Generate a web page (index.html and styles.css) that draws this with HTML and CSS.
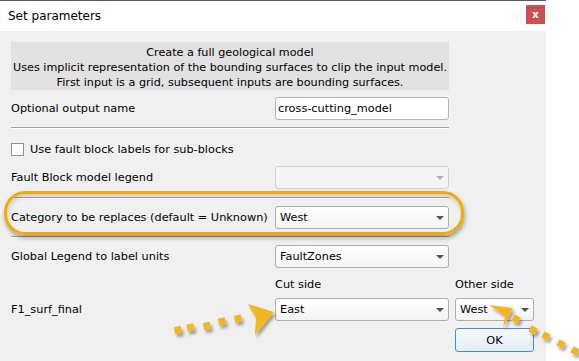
FILE: index.html
```html
<!DOCTYPE html>
<html>
<head>
<meta charset="utf-8">
<link rel="stylesheet" href="styles.css">
</head>
<body>
<div class="dialog">
  <div class="titlebar">
    <span class="title">Set parameters</span>
    <span class="close">x</span>
  </div>
  <div class="body">
    <div class="form">
      <div class="info">
        <div>Create a full geological model</div>
        <div>Uses implicit representation of the bounding surfaces to clip the input model.</div>
        <div>First input is a grid, subsequent inputs are bounding surfaces.</div>
      </div>

      <div class="label r-out">Optional output name</div>
      <div class="input r-out">cross-cutting_model</div>

      <div class="sep s1"></div>

      <div class="check r-chk"><span class="box"></span><span>Use fault block labels for sub-blocks</span></div>

      <div class="label r-fault">Fault Block model legend</div>
      <div class="combo disabled r-fault"><span></span><i class="arrow"></i></div>

      <div class="sep s2"></div>

      <div class="label r-cat">Category to be replaces (default = Unknown)</div>
      <div class="combo r-cat"><span>West</span><i class="arrow"></i><div class="ring"></div></div>

      <div class="sep s3"></div>

      <div class="label r-glob">Global Legend to label units</div>
      <div class="combo r-glob"><span>FaultZones</span><i class="arrow"></i></div>

      <div class="label c2 r-head">Cut side</div>
      <div class="label c3 r-head">Other side</div>

      <div class="label r-f1">F1_surf_final</div>
      <div class="combo r-f1"><span>East</span><i class="arrow"></i></div>
      <div class="combo c3 r-f1"><span>West</span><i class="arrow"></i></div>

      <div class="button c3 r-ok">OK</div>
    </div>
  </div>
</div>
<svg class="arrows" width="579" height="361" viewBox="0 0 579 361">
  <defs>
    <filter id="sh" x="-20%" y="-20%" width="140%" height="160%">
      <feDropShadow dx="2" dy="3" stdDeviation="1.6" flood-color="#000" flood-opacity="0.35"/>
    </filter>
  </defs>
  <g fill="#f4b523" filter="url(#sh)">
    <rect x="174.5" y="326.5" width="7" height="7" transform="rotate(-12 178 330)"/>
    <rect x="187" y="324" width="7" height="7" transform="rotate(-12 190.5 327.5)"/>
    <rect x="203.5" y="322.5" width="7" height="7" transform="rotate(-12 207 326)"/>
    <rect x="218.5" y="318" width="7" height="7" transform="rotate(-12 222 321.5)"/>
    <rect x="234.5" y="315" width="7" height="7" transform="rotate(-12 238 318.5)"/>
    <polygon points="248,304 274,312 255,335 256,318"/>

    <rect x="512.5" y="315.5" width="7" height="7" transform="rotate(30 516 319)"/>
    <rect x="529.5" y="326.5" width="7" height="7" transform="rotate(30 533 330)"/>
    <rect x="542.5" y="332.5" width="7" height="7" transform="rotate(30 546 336)"/>
    <rect x="557.5" y="340.5" width="7" height="7" transform="rotate(30 561 344)"/>
    <rect x="571.5" y="347.5" width="7" height="7" transform="rotate(30 575 351)"/>
    <polygon points="489,305 513,308 503,328 505,316"/>
  </g>
</svg>
</body>
</html>
```

FILE: styles.css
```css
html, body {
  margin: 0;
  padding: 0;
  background: #ffffff;
}
body {
  width: 579px;
  height: 361px;
  overflow: hidden;
  position: relative;
  font-family: "DejaVu Sans", sans-serif;
  font-size: 11.3px;
  color: #000;
}
.dialog {
  width: 546px;
  height: 361px;
  border-top: 1px solid #5a5a5a;
  box-sizing: border-box;
  display: flex;
  flex-direction: column;
}
.titlebar {
  height: 30px;
  background: #fff;
  display: flex;
  align-items: center;
  justify-content: space-between;
  padding-left: 8px;
  flex: none;
}
.title {
  font-size: 12px;
  margin-top: -1px;
}
.close {
  width: 19px;
  height: 19px;
  margin-right: 1px;
  margin-top: -3px;
  background: #c75050;
  color: #fff;
  font-weight: bold;
  font-size: 10px;
  display: flex;
  align-items: center;
  justify-content: center;
  line-height: 1;
}
.body {
  flex: 1;
  background: #f0f0f0;
  padding: 11px 0 0 11px;
}
.form {
  display: grid;
  grid-template-columns: 258px 174px 79px;
  column-gap: 6px;
  align-items: center;
}
.info {
  grid-column: 1 / 3;
  height: 48px;
  background: #e1e1e1;
  text-align: center;
  line-height: 15px;
  white-space: nowrap;
  font-size: 11.2px;
  display: flex;
  flex-direction: column;
  justify-content: center;
  padding-top: 2px;
  box-sizing: border-box;
}
.label {
  grid-column: 1;
  white-space: nowrap;
}
.c2 { grid-column: 2; }
.c3 { grid-column: 3; }
.r-out { margin-top: 7px; }
.input {
  grid-column: 2;
  height: 23px;
  box-sizing: border-box;
  background: #fff;
  border: 1px solid #b5b5b5;
  border-radius: 3px;
  padding-left: 2px;
  display: flex;
  align-items: center;
}
.sep {
  grid-column: 1 / 3;
  height: 1px;
  background: #a0a0a0;
  box-shadow: 0 1px 0 #fff;
}
.s1 { margin-top: 7px; }
.s2 { margin-top: 8px; }
.s3 { margin-top: 7px; }
.check {
  grid-column: 1 / 3;
  display: flex;
  align-items: center;
  margin-top: 14px;
  height: 14px;
}
.box {
  width: 13px;
  height: 13px;
  box-sizing: border-box;
  border: 1px solid #8f8f8f;
  background: #fff;
  margin-right: 6px;
}
.combo {
  grid-column: 2;
  position: relative;
  height: 23px;
  box-sizing: border-box;
  background: linear-gradient(#ffffff, #f4f4f4);
  border: 1px solid #adadad;
  border-radius: 3px;
  padding-left: 4px;
  display: flex;
  align-items: center;
  justify-content: space-between;
}
.combo.c3 { grid-column: 3; }
.arrow {
  width: 0;
  height: 0;
  border-left: 4px solid transparent;
  border-right: 4px solid transparent;
  border-top: 4px solid #555;
  margin-right: 4px;
}
.combo.disabled {
  background: #f5f5f5;
  border-color: #cfcfcf;
}
.combo.disabled .arrow { border-top-color: #b0b0b0; }
.r-fault { margin-top: 10px; }
.r-cat { margin-top: 8px; }
.r-glob { margin-top: 8px; }
.r-head { margin-top: 8px; height: 16px; display: flex; align-items: center; }
.r-f1 { margin-top: 6px; }
.r-ok { margin-top: 7px; }
.ring {
  position: absolute;
  left: -272px;
  top: -16px;
  width: 460px;
  height: 44px;
  box-sizing: border-box;
  border: 3px solid #f5a800;
  border-radius: 21px;
  box-shadow: 1px 3px 4px rgba(0,0,0,0.35), inset 1px 3px 4px rgba(0,0,0,0.15);
  pointer-events: none;
}
.button {
  height: 24px;
  box-sizing: border-box;
  border: 1px solid #3d8ee0;
  border-radius: 3px;
  background: linear-gradient(#f4f9fd, #e4eef8);
  display: flex;
  align-items: center;
  justify-content: center;
}
.arrows {
  position: absolute;
  left: 0;
  top: 0;
  pointer-events: none;
}
```
